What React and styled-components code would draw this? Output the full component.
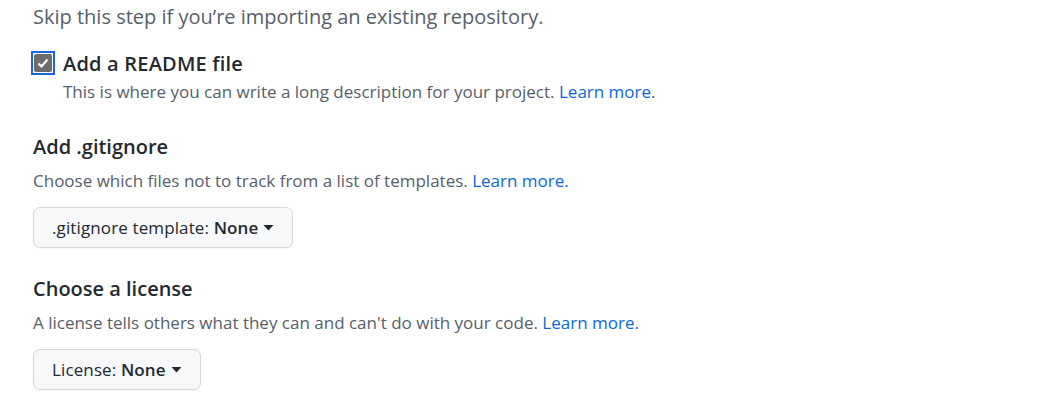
import React from "react";
import styled, { createGlobalStyle } from "styled-components";

const GlobalStyle = createGlobalStyle`
  html, body {
    margin: 0;
    padding: 0;
    background: #ffffff;
  }
  body {
    font-family: "Open Sans", "Noto Sans", sans-serif;
    color: #24292f;
  }
`;

const Page = styled.div`
  width: 1054px;
  height: 412px;
  overflow: hidden;
  padding: 0 0 0 33px;
  box-sizing: border-box;
`;

const Note = styled.p`
  margin: 0;
  margin-top: ${(p) => p.$top || 0}px;
  font-size: ${(p) => p.$size || 17}px;
  line-height: ${(p) => p.$lh || 24}px;
  color: #57606a;
  white-space: nowrap;
`;

const Link = styled.a`
  color: #0969da;
  text-decoration: none;
`;

const CheckRow = styled.label`
  display: flex;
  align-items: flex-start;
  gap: 8px;
  margin-top: 19px;
  margin-left: -2px;
`;

const CheckBox = styled.span`
  flex: none;
  box-sizing: border-box;
  width: 24px;
  height: 24px;
  border: 2px solid #1a66e0;
  padding: 1px;
  display: flex;
  align-items: center;
  justify-content: center;
  margin-top: 1px;
`;

const CheckFill = styled.span`
  width: 18px;
  height: 18px;
  border-radius: 2px;
  background: #6d6d6d;
  display: flex;
  align-items: center;
  justify-content: center;
`;

const CheckText = styled.div`
  display: flex;
  flex-direction: column;
`;

const CheckLabel = styled.span`
  font-size: 20px;
  line-height: 28px;
  font-weight: 600;
  letter-spacing: 0.2px;
  color: #24292f;
`;

const Heading = styled.h3`
  margin: 0;
  margin-top: ${(p) => p.$top}px;
  font-size: 20px;
  line-height: 28px;
  font-weight: 600;
  color: #24292f;
`;

const SelectButton = styled.button`
  display: inline-flex;
  align-items: center;
  gap: 5px;
  margin-top: 14px;
  height: 41px;
  padding: 0 18px;
  box-sizing: border-box;
  background: #f6f8fa;
  border: 1px solid #d4d9de;
  border-radius: 7px;
  box-shadow: 0 1px 0 rgba(31, 35, 40, 0.04);
  font-family: inherit;
  font-size: 17px;
  letter-spacing: 0.12px;
  color: #24292f;
  cursor: pointer;

  b {
    font-weight: 600;
  }
`;

const Caret = () => (
  <svg width="11" height="11" viewBox="0 0 11 11" aria-hidden="true">
    <path d="M0.5 3h10L5.5 8.5z" fill="#24292f" />
  </svg>
);

export default function App() {
  return (
    <>
      <GlobalStyle />
      <Page>
        <Note $size={20} $lh={28} $top={3}>
          Skip this step if you’re importing an existing repository.
        </Note>

        <CheckRow>
          <CheckBox>
            <CheckFill>
              <svg width="14" height="14" viewBox="0 0 14 14">
                <path d="M2.5 7.5l3 3 6-7" fill="none" stroke="#fff" strokeWidth="2.2" />
              </svg>
            </CheckFill>
          </CheckBox>
          <CheckText>
            <CheckLabel>Add a README file</CheckLabel>
            <Note $top={2}>
              This is where you can write a long description for your project.{" "}
              <Link href="#">Learn more.</Link>
            </Note>
          </CheckText>
        </CheckRow>

        <Heading $top={29}>Add .gitignore</Heading>
        <Note $top={8}>
          Choose which files not to track from a list of templates.{" "}
          <Link href="#">Learn more.</Link>
        </Note>
        <SelectButton>
          <span>
            .gitignore template: <b>None</b>
          </span>
          <Caret />
        </SelectButton>

        <Heading $top={27}>Choose a license</Heading>
        <Note $top={8}>
          A license tells others what they can and can't do with your code.{" "}
          <Link href="#">Learn more.</Link>
        </Note>
        <SelectButton>
          <span>
            License: <b>None</b>
          </span>
          <Caret />
        </SelectButton>
      </Page>
    </>
  );
}
